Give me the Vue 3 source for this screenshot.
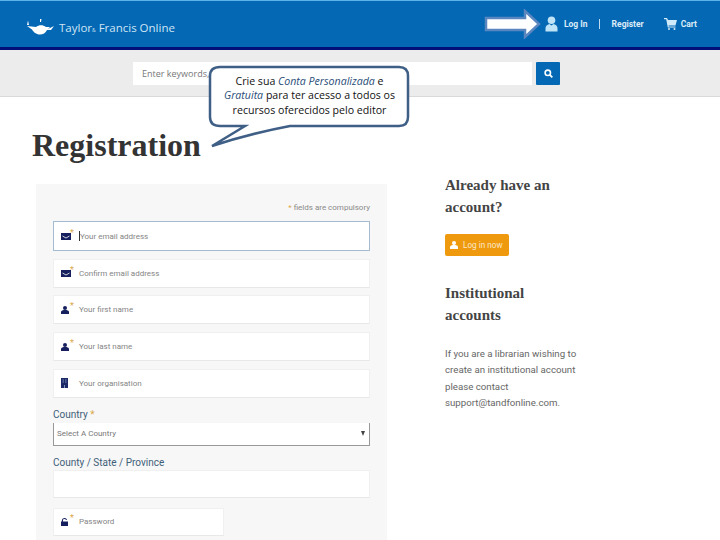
<script setup>
const fields = [
  { ph: 'Your email address', icon: 'mail', star: true, focus: true, caret: true },
  { ph: 'Confirm email address', icon: 'mail', star: true },
  { ph: 'Your first name', icon: 'user', star: true },
  { ph: 'Your last name', icon: 'user', star: true },
  { ph: 'Your organisation', icon: 'org', star: false }
]
</script>

<template>
  <div class="page">
    <header class="top">
      <div class="logo">
        <svg class="lamp" width="30" height="18" viewBox="0 0 30 18">
          <path d="M2 2.5 L3 7 L1 7 Z" fill="#fff" />
          <path d="M14 1 L15.5 1 L15 4 L14 4 Z" fill="#fff" />
          <path d="M1 8 L10 9 C13 6.5 17 6.5 20 9 L24 9 L22 11 L28 8 L25 12 L21 12 C19.5 15 17 16.5 14 16.5 C10 16.5 7.5 14 6 11.5 Z" fill="#fff" />
        </svg>
        <span class="brand">Taylor<small>&amp;</small> Francis Online</span>
      </div>
      <nav class="nav">
        <svg class="arrow" width="58" height="30" viewBox="0 0 58 30">
          <path d="M2 9 H41 V2 L55 15 L41 28 V21 H2 Z" fill="#fff" stroke="#5a86c0" stroke-width="2.5" />
        </svg>
        <svg class="nav-user" width="13" height="16" viewBox="0 0 13 16">
          <circle cx="6.5" cy="4.2" r="3.8" fill="#bfe3f7" />
          <path d="M0.5 15.5 V12 C0.5 9.5 3 8.5 4.5 8 L6.5 9.5 L8.5 8 C10 8.5 12.5 9.5 12.5 12 V15.5 Z" fill="#bfe3f7" />
        </svg>
        <span class="nav-link">Log In</span>
        <span class="sep"></span>
        <span class="nav-link register">Register</span>
        <svg class="cart" width="13" height="12" viewBox="0 0 13 12">
          <path d="M0 0 H3 L4 2 H13 L11.5 7.5 H4.5 L4.8 8.6 H11.5 V9.6 H3.8 L2.2 1.2 H0 Z" fill="#cfeafa" />
          <circle cx="5" cy="11" r="1" fill="#cfeafa" />
          <circle cx="10.5" cy="11" r="1" fill="#cfeafa" />
        </svg>
        <span class="nav-link">Cart</span>
      </nav>
    </header>

    <div class="searchbar">
      <div class="search-input">Enter keywords,</div>
      <div class="search-btn">
        <svg width="9" height="9" viewBox="0 0 9 9">
          <circle cx="3.8" cy="3.8" r="2.7" fill="none" stroke="#fff" stroke-width="1.6" />
          <path d="M5.8 5.8 L8.3 8.3" stroke="#fff" stroke-width="1.8" />
        </svg>
      </div>
    </div>

    <div class="bubble">
      <svg class="bubble-shape" width="204" height="86" viewBox="0 0 204 86">
        <path d="M12 2 H191 Q200 2 200 11 V52 Q200 61 191 61 H82 Q40 69 4 81 L37 61 H12 Q2 61 2 52 V11 Q2 2 12 2 Z" fill="#fff" stroke="#3f5f86" stroke-width="2.5" />
      </svg>
      <p class="bubble-text">Crie sua <em>Conta Personalizada</em> e<br /><em>Gratuita</em> para ter acesso a todos os<br />recursos oferecidos pelo editor</p>
    </div>

    <h1 class="title">Registration</h1>

    <main class="content">
      <section class="panel">
        <div class="note"><span class="gold">*</span> fields are compulsory</div>
        <div v-for="f in fields" :key="f.ph" class="field" :class="{ focus: f.focus }">
          <span class="ficon">
            <svg v-if="f.icon === 'mail'" width="10" height="7" viewBox="0 0 10 7">
              <path d="M0 0 H10 V7 H0 Z" fill="#16205e" />
              <path d="M1.5 3 L5 5 L8.5 3" fill="none" stroke="#fff" stroke-width=".8" />
            </svg>
            <svg v-else-if="f.icon === 'user'" width="8" height="8" viewBox="0 0 8 8">
              <circle cx="4" cy="2" r="2" fill="#16205e" />
              <path d="M0 8 V6 C0 4.6 2 4 4 4 C6 4 8 4.6 8 6 V8 Z" fill="#16205e" />
            </svg>
            <svg v-else width="7" height="10" viewBox="0 0 7 10">
              <path d="M0 0 H7 V10 H0 Z" fill="#1b2a66" />
              <path d="M1.5 2 H3 M4 2 H5.5 M1.5 4 H3 M4 4 H5.5 M3.5 7 V10" stroke="#8c9bc4" stroke-width=".9" />
            </svg>
            <span v-if="f.star" class="star">*</span>
          </span>
          <span class="caret" v-if="f.caret"></span>
          <span class="ph">{{ f.ph }}</span>
        </div>
        <label class="label first">Country <span class="gold">*</span></label>
        <div class="select">
          <span>Select A Country</span>
          <span class="tri"></span>
        </div>
        <label class="label second">County / State / Province</label>
        <div class="field blank"></div>
        <div class="field password">
          <span class="ficon">
            <svg width="7" height="8" viewBox="0 0 7 8">
              <path d="M1.4 4 V2.4 C1.4 0 5.4 0 5.4 2" fill="none" stroke="#16205e" stroke-width="1.1" />
              <path d="M0 3.5 H7 V8 H0 Z" fill="#16205e" />
            </svg>
            <span class="star">*</span>
          </span>
          <span class="ph">Password</span>
        </div>
      </section>

      <aside class="side">
        <h2>Already have an<br />account?</h2>
        <button class="login-btn" type="button">
          <svg width="8" height="8" viewBox="0 0 8 8">
            <circle cx="4" cy="2" r="2" fill="#fff" />
            <path d="M0 8 V6 C0 4.6 2 4 4 4 C6 4 8 4.6 8 6 V8 Z" fill="#fff" />
          </svg>
          <span>Log in now</span>
        </button>
        <h2 class="inst">Institutional<br />accounts</h2>
        <p>If you are a librarian wishing to<br />create an institutional account<br />please contact<br />support@tandfonline.com.</p>
      </aside>
    </main>
  </div>
</template>

<style scoped>
.page {
  position: relative;
  width: 720px;
  height: 540px;
  overflow: hidden;
  background: #fff;
  font-family: "Open Sans", "Liberation Sans", sans-serif;
}
.top {
  box-sizing: border-box;
  height: 50px;
  background: #0468b4;
  border-top: 1px solid #5cb2ea;
  border-bottom: 3px solid #04107a;
  display: flex;
  align-items: center;
  justify-content: space-between;
  padding: 0 23px 0 26px;
}
.logo {
  display: flex;
  align-items: center;
  gap: 3px;
  margin-top: 6px;
}
.brand {
  color: #cfe5f5;
  font: 11.5px "Open Sans", sans-serif;
  letter-spacing: 0;
}
.brand small {
  font-size: 5px;
  letter-spacing: 0;
}
.nav {
  display: flex;
  align-items: center;
  color: #dcecf8;
}
.arrow {
  margin-right: 3px;
}
.nav-user {
  margin-right: 6px;
}
.nav-link {
  font: 700 8.5px Roboto, sans-serif;
}
.sep {
  width: 1px;
  height: 10px;
  background: #bcdaf0;
  margin: 0 12px 0 11px;
}
.register {
  margin-right: 20px;
}
.cart {
  margin-right: 4px;
}
.searchbar {
  box-sizing: border-box;
  height: 47px;
  background: #ececec;
  border-bottom: 1px solid #d9d9d9;
  display: flex;
  align-items: flex-start;
  padding: 12px 0 0 133px;
  gap: 4px;
}
.search-input {
  box-sizing: border-box;
  width: 399px;
  height: 23px;
  background: #fff;
  color: #777;
  font-size: 9px;
  line-height: 23px;
  padding-left: 9px;
}
.search-btn {
  width: 24px;
  height: 23px;
  background: #0468b4;
  border-radius: 1px;
  display: flex;
  align-items: center;
  justify-content: center;
}
.bubble {
  position: absolute;
  left: 208px;
  top: 65px;
  width: 204px;
  height: 86px;
}
.bubble-shape {
  position: absolute;
  inset: 0;
}
.bubble-text {
  position: absolute;
  left: 3px;
  top: 9px;
  width: 197px;
  margin: 0;
  text-align: center;
  font: 10.6px/14.4px "Open Sans", sans-serif;
  color: #111;
}
.bubble-text em {
  color: #2a4d78;
}
.title {
  margin: 32px 0 0 32px;
  height: 33px;
  font: 700 32px/33px "Liberation Serif", serif;
  color: #333;
}
.content {
  display: flex;
  align-items: flex-start;
  margin: 22px 0 0 36px;
  gap: 58px;
}
.panel {
  box-sizing: border-box;
  width: 351px;
  height: 400px;
  background: #f7f7f7;
  padding: 17px 17px 0;
}
.note {
  text-align: right;
  font: 8px/14px Roboto, sans-serif;
  color: #8a8a8a;
  margin-bottom: 6px;
}
.gold {
  color: #dba94e;
}
.field {
  box-sizing: border-box;
  height: 29px;
  background: #fff;
  border: 1px solid #f0f0f0;
  border-bottom-color: #e8e8e8;
  margin-bottom: 7.7px;
  display: flex;
  align-items: center;
  padding: 0 0 0 7px;
  font: 8px Roboto, sans-serif;
}
.focus {
  height: 30px;
  border-color: #a4bbd2;
}
.ficon {
  position: relative;
  width: 18px;
  display: flex;
  align-items: center;
}
.star {
  position: absolute;
  left: 9px;
  top: -5px;
  color: #dba94e;
  font-size: 9px;
  line-height: 10px;
}
.ph {
  color: #858585;
}
.caret {
  width: 1px;
  height: 10px;
  background: #333;
}
.label {
  display: block;
  font: 10px/13px Roboto, sans-serif;
  color: #3f6077;
}
.first {
  margin-top: 10.7px;
}
.second {
  margin-top: 10.5px;
  margin-bottom: 1px;
}
.select {
  box-sizing: border-box;
  height: 23px;
  margin-top: 1.5px;
  background: #fff;
  border-left: 1px solid #999;
  border-right: 1px solid #999;
  border-bottom: 1px solid #999;
  display: flex;
  align-items: center;
  justify-content: space-between;
  padding: 0 4px 0 3px;
  font: 8px Roboto, sans-serif;
  color: #777;
}
.tri {
  border-left: 2.5px solid transparent;
  border-right: 2.5px solid transparent;
  border-top: 5px solid #444;
}
.blank {
  height: 28px;
  margin-bottom: 9.5px;
}
.password {
  width: 171px;
  height: 28px;
}
.side {
  width: 140px;
}
.side h2 {
  margin: -10px 0 0;
  font: 700 15px/22px "Liberation Serif", serif;
  color: #444;
}
.login-btn {
  display: flex;
  align-items: center;
  gap: 5px;
  width: 64px;
  height: 22px;
  margin-top: 16px;
  padding: 0 0 0 5px;
  border: 0;
  border-radius: 2px;
  background: #ef9a0e;
  color: #fbe7c8;
  font: 8.2px Roboto, sans-serif;
}
.side .inst {
  margin-top: 26px;
}
.side p {
  margin: 20px 0 0;
  font: 9.7px/16.3px Roboto, sans-serif;
  color: #666;
}
</style>
